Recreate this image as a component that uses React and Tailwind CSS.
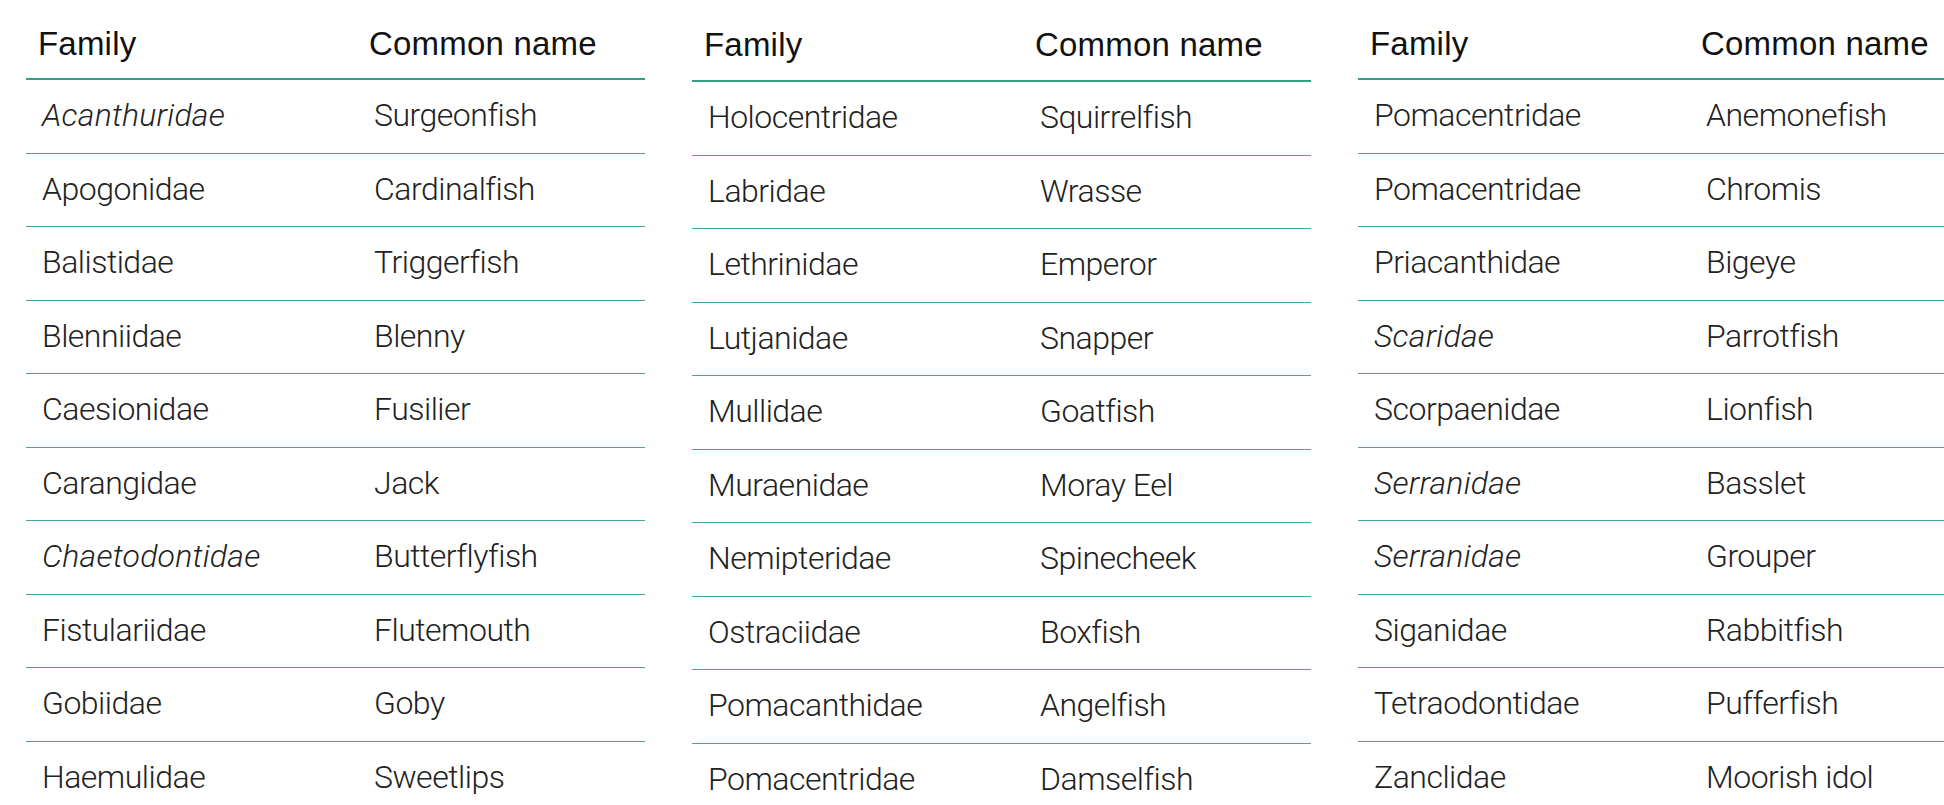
import React from "react";

const tables = [
  {
    offset: "mt-0",
    head: "h-[80px] pb-[16px]",
    rows: [
      ["Acanthuridae", "Surgeonfish", true],
      ["Apogonidae", "Cardinalfish"],
      ["Balistidae", "Triggerfish"],
      ["Blenniidae", "Blenny"],
      ["Caesionidae", "Fusilier"],
      ["Carangidae", "Jack"],
      ["Chaetodontidae", "Butterflyfish", true],
      ["Fistulariidae", "Flutemouth"],
      ["Gobiidae", "Goby"],
      ["Haemulidae", "Sweetlips"],
    ],
  },
  {
    offset: "mt-[1px]",
    head: "h-[81px] pb-[17px]",
    rows: [
      ["Holocentridae", "Squirrelfish"],
      ["Labridae", "Wrasse"],
      ["Lethrinidae", "Emperor"],
      ["Lutjanidae", "Snapper"],
      ["Mullidae", "Goatfish"],
      ["Muraenidae", "Moray Eel"],
      ["Nemipteridae", "Spinecheek"],
      ["Ostraciidae", "Boxfish"],
      ["Pomacanthidae", "Angelfish"],
      ["Pomacentridae", "Damselfish"],
    ],
  },
  {
    offset: "mt-0",
    head: "h-[80px] pb-[16px]",
    rows: [
      ["Pomacentridae", "Anemonefish"],
      ["Pomacentridae", "Chromis"],
      ["Priacanthidae", "Bigeye"],
      ["Scaridae", "Parrotfish", true],
      ["Scorpaenidae", "Lionfish"],
      ["Serranidae", "Basslet", true],
      ["Serranidae", "Grouper", true],
      ["Siganidae", "Rabbitfish"],
      ["Tetraodontidae", "Pufferfish"],
      ["Zanclidae", "Moorish idol"],
    ],
  },
];

function FishTable({ table }) {
  return (
    <div className={`w-[619px] shrink-0 ${table.offset}`}>
      {/* header */}
      <div
        className={`flex items-end border-b-2 border-[#33a086] font-['Liberation_Sans',Arial,sans-serif] text-[33px] leading-[36px] tracking-[0.2px] text-[#111] ${table.head}`}
      >
        <div className="w-[331px] pl-[12px]">Family</div>
        <div className="pl-[12px]">Common name</div>
      </div>

      {/* rows */}
      {table.rows.map(([family, common, italic]) => (
        <div
          key={family + common}
          className="flex h-[73.5px] items-center border-b border-[#46a59c] pb-[2px] font-['Roboto',sans-serif] text-[32px] font-light tracking-[-0.5px] text-[#222]"
        >
          <div className={`w-[331px] pl-[16px] ${italic ? "italic tracking-[0.2px]" : ""}`}>{family}</div>
          <div className="pl-[17px]">{common}</div>
        </div>
      ))}
    </div>
  );
}

export default function App() {
  return (
    <div className="h-screen w-full overflow-hidden bg-white">
      <div className="flex gap-[47px] pl-[26px]">
        {tables.map((t, i) => (
          <FishTable key={i} table={t} />
        ))}
      </div>
    </div>
  );
}
